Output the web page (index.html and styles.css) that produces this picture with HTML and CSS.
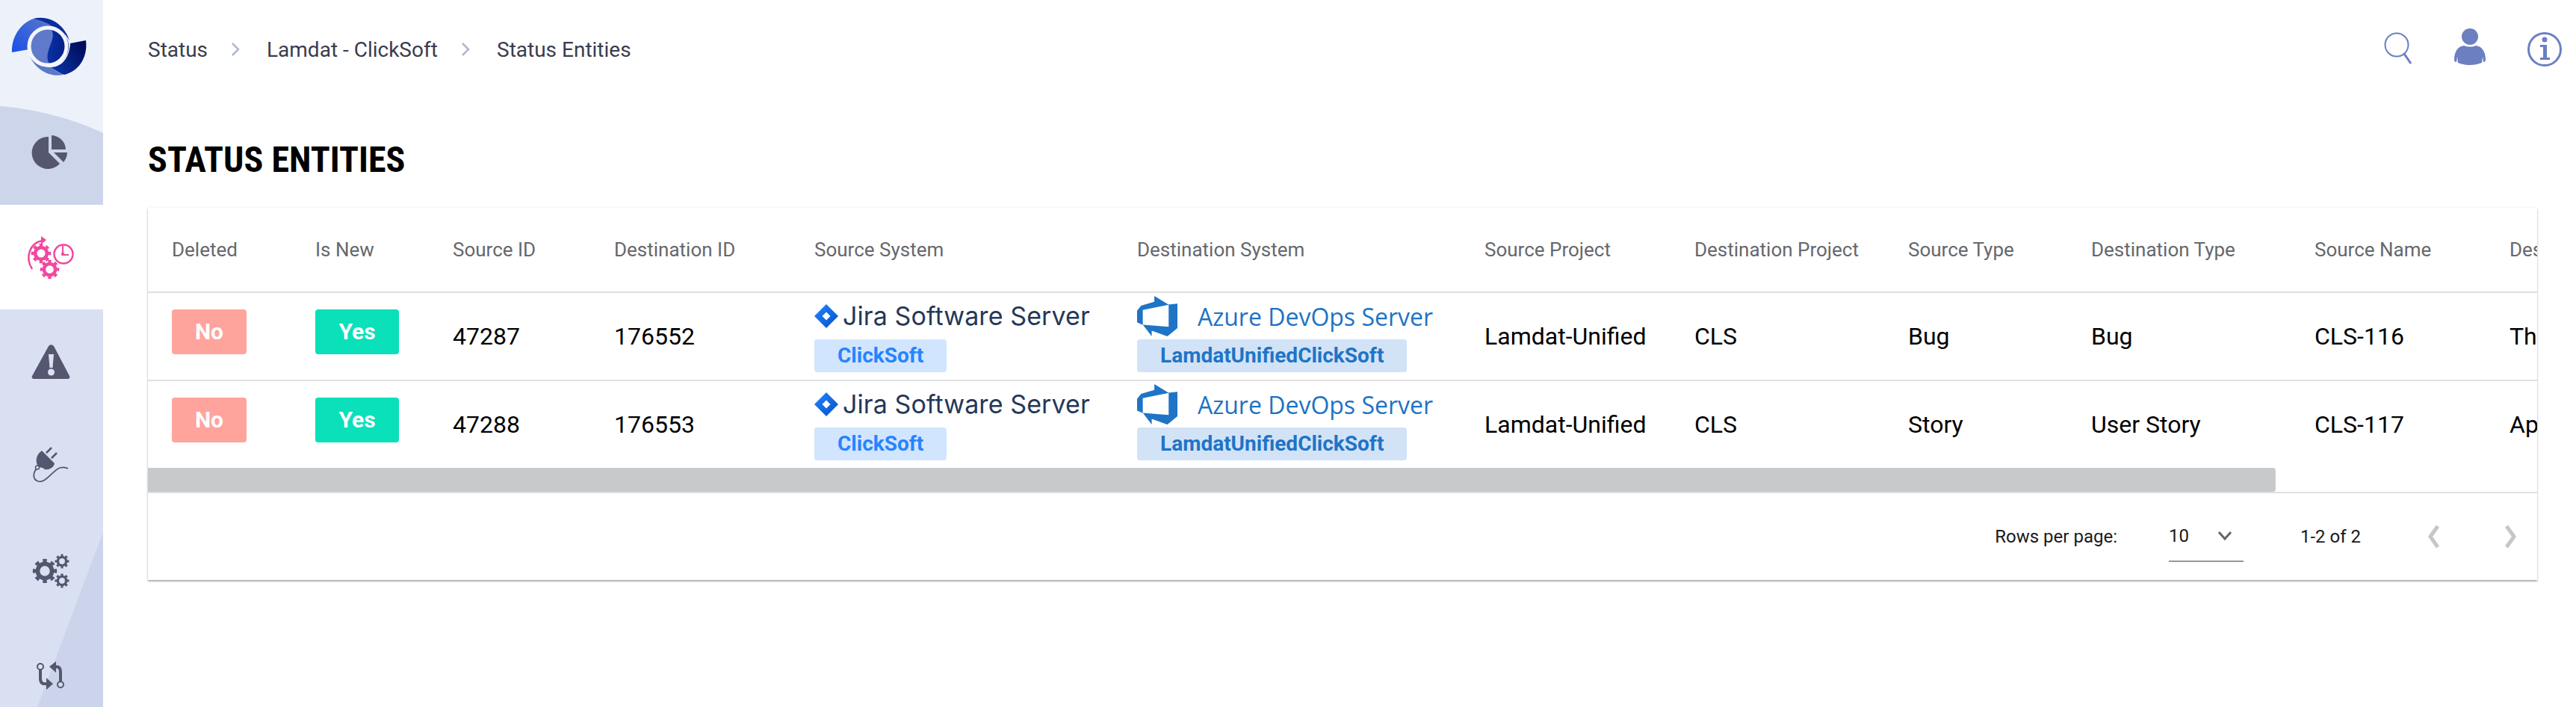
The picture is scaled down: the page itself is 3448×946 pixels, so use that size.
FILE: index.html
```html
<!DOCTYPE html>
<html lang="en">
<head>
<meta charset="utf-8">
<title>Status Entities</title>
<link rel="stylesheet" href="styles.css">
</head>
<body>
<svg class="defs" width="0" height="0" aria-hidden="true">
  <defs>
    <symbol id="gear" viewBox="-16 -16 32 32">
      <circle r="9" fill="none" stroke="currentColor" stroke-width="5.4"/>
      <circle r="12.6" fill="none" stroke="currentColor" stroke-width="5.2" pathLength="16" stroke-dasharray="1 1" stroke-dashoffset="0.5"/>
    </symbol>
    <linearGradient id="lg-left" x1="0" y1="1" x2="1" y2="0">
      <stop offset="0" stop-color="#1650ea"/><stop offset="1" stop-color="#6079c4"/>
    </linearGradient>
    <linearGradient id="lg-right" x1="0" y1="1" x2="1" y2="0.3">
      <stop offset="0" stop-color="#0b38ae"/><stop offset="1" stop-color="#000d5c"/>
    </linearGradient>
    <linearGradient id="lg-core" x1="0" y1="0" x2="1" y2="0">
      <stop offset="0" stop-color="#0a31a6"/><stop offset="1" stop-color="#041d7d"/>
    </linearGradient>
    <linearGradient id="lg-jira" x1="0" y1="0" x2="1" y2="1">
      <stop offset="0" stop-color="#2684ff"/><stop offset="1" stop-color="#0052cc"/>
    </linearGradient>
  </defs>
</svg>

<div class="page">
  <nav class="sidebar">
    <div class="side-logo">
      <svg class="logo" viewBox="0 0 138 134">
        <path d="M16 70C15 45 33 26 50 24C60 26 67 31 72 36C54 36 41 47 39 66Z" fill="url(#lg-left)"/>
        <path d="M45 25C68 19 87 35 93 54C87 44 79 38 70 35C62 30 55 27 45 25Z" fill="#0a2c9c"/>
        <path d="M94 58L115 54C118 78 104 96 86 100C80 98 74 94 68 90C82 90 93 78 94 58Z" fill="url(#lg-right)"/>
        <path d="M38 70C42 84 55 90 68 90C74 94 78 97 85 100C65 104 45 92 38 70Z" fill="#5c78c8"/>
        <circle cx="64" cy="62" r="25" fill="#5f7acb"/>
        <path d="M67 37C74 46 70 53 66 64C62 75 63 81 67 87A25 25 0 0 0 67 37Z" fill="url(#lg-core)"/>
        <circle cx="64" cy="62" r="25" fill="none" stroke="#f4f6fb" stroke-width="5"/>
      </svg>
    </div>
    <a class="side-item side-pie">
      <svg class="nav-icon" viewBox="29 164 80 80">
        <path d="M65 183V204L80 219A21.500 21.500 0 1 1 65 183Z" fill="currentColor"/>
        <path d="M69 181A20 20 0 0 1 88 200H69Z" fill="currentColor"/>
        <path d="M72 204H90A21 21 0 0 1 85 217Z" fill="currentColor"/>
      </svg>
    </a>
    <a class="side-item side-active">
      <svg class="nav-icon" viewBox="29 304 80 80">
        <path d="M43 360C33 344 40 324 58 322" fill="none" stroke="currentColor" stroke-width="2.500"/>
        <path d="M55 316L62 321L55 327Z" fill="currentColor"/>
        <use href="#gear" x="41" y="325" width="28" height="28"/>
        <use href="#gear" x="53" y="347" width="27" height="27"/>
        <circle cx="85" cy="340" r="12.500" fill="#fff" stroke="currentColor" stroke-width="2.500"/>
        <path d="M84 329V341H92" fill="none" stroke="currentColor" stroke-width="2"/>
        <circle cx="84" cy="340" r="2.200" fill="currentColor"/>
      </svg>
    </a>
    <a class="side-item">
      <svg class="nav-icon" viewBox="29 444 80 80">
        <path d="M64 465C66 460 71 460 73 465L93 503C94 505 93 507 90 507H46C43 507 42 505 43 503Z" fill="currentColor"/>
        <path d="M65 474H72L70.500 492H66.500Z" fill="#dbe1f1"/>
        <circle cx="68.500" cy="498" r="4.500" fill="#dbe1f1"/>
      </svg>
    </a>
    <a class="side-item">
      <svg class="nav-icon" viewBox="29 584 80 80">
        <path d="M56 603L73 620C72 626 65 629 60 628L57 626L52 625C47 620 47 609 56 603Z" fill="currentColor"/>
        <path d="M62 606L69 599M69 613L76 606" fill="none" stroke="currentColor" stroke-width="2.500"/>
        <path d="M50 626C44 632 43 641 51 644C61 647 70 630 80 626C84 625 88 625 91 627" fill="none" stroke="currentColor" stroke-width="1.800"/>
        <circle cx="50" cy="625.500" r="2.500" fill="#dbe1f1" stroke="currentColor" stroke-width="1.500"/>
      </svg>
    </a>
    <a class="side-item">
      <svg class="nav-icon" viewBox="29 724 80 80">
        <use href="#gear" x="43" y="747" width="34" height="34"/>
        <use href="#gear" x="73" y="741" width="20" height="20"/>
        <use href="#gear" x="73" y="767" width="20" height="20"/>
      </svg>
    </a>
    <a class="side-item">
      <svg class="nav-icon" viewBox="29 864 80 80">
        <path d="M54 896V908C54 913 56 915 60 915H64" fill="none" stroke="currentColor" stroke-width="4"/>
        <path d="M62 907L71 915L62 923Z" fill="currentColor"/>
        <path d="M81 912V899C81 894 79 892 75 892H72" fill="none" stroke="currentColor" stroke-width="4"/>
        <path d="M75 885L66 892L75 900Z" fill="currentColor"/>
        <circle cx="54" cy="892" r="4" fill="#dbe1f1" stroke="currentColor" stroke-width="2"/>
        <circle cx="81" cy="916" r="4" fill="#d2d9ee" stroke="currentColor" stroke-width="2"/>
      </svg>
    </a>
  </nav>

  <main class="main">
    <header class="topbar">
      <ol class="crumbs">
        <li class="crumb crumb-first">Status</li>
        <li class="crumb-sep"><svg class="sep-icon" viewBox="0 0 12 20"><path d="M2 2L10 10L2 18" fill="none" stroke="#aeb9cd" stroke-width="2.500"/></svg></li>
        <li class="crumb crumb-second">Lamdat - ClickSoft</li>
        <li class="crumb-sep"><svg class="sep-icon" viewBox="0 0 12 20"><path d="M2 2L10 10L2 18" fill="none" stroke="#aeb9cd" stroke-width="2.500"/></svg></li>
        <li class="crumb">Status Entities</li>
      </ol>
      <div class="tools">
        <svg class="tool tool-search" viewBox="0 0 40 60"><circle cx="18" cy="20" r="15.500" fill="none" stroke="currentColor" stroke-width="2"/><path d="M28 32L37 45" fill="none" stroke="currentColor" stroke-width="3"/></svg>
        <svg class="tool tool-user" viewBox="0 0 44 60"><circle cx="22" cy="11" r="11" fill="currentColor"/><path d="M14 23C18 25 26 25 30 23C38 24 43 31 43 42C43 44 42 45 40 45L39 38L38 46C28 50 16 50 6 46L5 38L4 45C2 45 1 44 1 42C1 31 6 24 14 23Z" fill="currentColor"/></svg>
        <svg class="tool tool-info" viewBox="0 0 46 60"><circle cx="23" cy="30" r="21.500" fill="none" stroke="currentColor" stroke-width="3"/><circle cx="23" cy="17" r="3.500" fill="currentColor"/><path d="M17 24H26V41H30V44H17V41H21V27H17Z" fill="currentColor"/></svg>
      </div>
    </header>

    <h1 class="title">STATUS ENTITIES</h1>

    <section class="card">
      <div class="table-clip">
        <table class="grid">
          <thead>
            <tr>
              <th>Deleted</th><th>Is New</th><th>Source ID</th><th>Destination ID</th><th>Source System</th><th>Destination System</th><th>Source Project</th><th>Destination Project</th><th>Source Type</th><th>Destination Type</th><th>Source Name</th><th>Destination Name</th>
            </tr>
          </thead>
          <tbody>
            <tr>
              <td class="cell-badge"><span class="badge badge-no">No</span></td>
              <td class="cell-badge"><span class="badge badge-yes">Yes</span></td>
              <td>47287</td><td>176552</td>
              <td class="cell-sys">
                <div class="sys-logo">
                  <svg class="jira-mark" viewBox="0 0 32 32"><path d="M16 0L32 16L16 32L0 16Z" fill="url(#lg-jira)"/><path d="M16 10.500L21.500 16L16 21.500L10.500 16Z" fill="#fff"/></svg>
                  <span class="jira-name">Jira Software Server</span>
                </div>
                <span class="chip chip-jira">ClickSoft</span>
              </td>
              <td class="cell-sys">
                <div class="sys-logo">
                  <svg class="azure-mark" viewBox="1 1 16 16"><path d="M17 4v9.740l-4 3.280-6.200-2.260V17l-3.510-4.590 10.230.8V4.440zm-3.410.49L7.850 1v2.290L2.580 4.840 1 6.870v4.610l2.260 1V6.570z" fill="#1f74c6"/></svg>
                  <span class="azure-name">Azure DevOps Server</span>
                </div>
                <span class="chip chip-azure">LamdatUnifiedClickSoft</span>
              </td>
              <td>Lamdat-Unified</td><td>CLS</td><td>Bug</td><td>Bug</td><td>CLS-116</td><td>The login page fails</td>
            </tr>
            <tr>
              <td class="cell-badge"><span class="badge badge-no">No</span></td>
              <td class="cell-badge"><span class="badge badge-yes">Yes</span></td>
              <td>47288</td><td>176553</td>
              <td class="cell-sys">
                <div class="sys-logo">
                  <svg class="jira-mark" viewBox="0 0 32 32"><path d="M16 0L32 16L16 32L0 16Z" fill="url(#lg-jira)"/><path d="M16 10.500L21.500 16L16 21.500L10.500 16Z" fill="#fff"/></svg>
                  <span class="jira-name">Jira Software Server</span>
                </div>
                <span class="chip chip-jira">ClickSoft</span>
              </td>
              <td class="cell-sys">
                <div class="sys-logo">
                  <svg class="azure-mark" viewBox="1 1 16 16"><path d="M17 4v9.740l-4 3.280-6.200-2.260V17l-3.510-4.590 10.230.8V4.440zm-3.410.49L7.850 1v2.290L2.580 4.840 1 6.870v4.610l2.260 1V6.570z" fill="#1f74c6"/></svg>
                  <span class="azure-name">Azure DevOps Server</span>
                </div>
                <span class="chip chip-azure">LamdatUnifiedClickSoft</span>
              </td>
              <td>Lamdat-Unified</td><td>CLS</td><td>Story</td><td>User Story</td><td>CLS-117</td><td>Approve the request</td>
            </tr>
          </tbody>
        </table>
      </div>
      <div class="scroll-track"><div class="scroll-thumb"></div></div>
      <footer class="pager">
        <span class="pager-label">Rows per page:</span>
        <div class="pager-select">
          <span>10</span>
          <svg class="pager-caret" viewBox="0 0 20 14"><path d="M2 2L10 11L18 2" fill="none" stroke="#666" stroke-width="3"/></svg>
        </div>
        <span class="pager-count">1-2 of 2</span>
        <svg class="pager-arrow pager-prev" viewBox="0 0 24 32"><path d="M17 2L7 16L17 30" fill="none" stroke="#c4c6c8" stroke-width="5"/></svg>
        <svg class="pager-arrow" viewBox="0 0 24 32"><path d="M7 2L17 16L7 30" fill="none" stroke="#c4c6c8" stroke-width="5"/></svg>
      </footer>
    </section>
  </main>
</div>
</body>
</html>
```

FILE: styles.css
```css
* { box-sizing: border-box; }

html, body {
  margin: 0;
  height: 100%;
  background: #fff;
  font-family: Roboto, "Liberation Sans", sans-serif;
  overflow: hidden;
}

.defs { position: absolute; }

.page {
  display: flex;
  width: 3448px;
  height: 946px;
  overflow: hidden;
}

/* Sidebar */
.sidebar {
  position: relative;
  flex: 0 0 138px;
  display: flex;
  flex-direction: column;
  height: 946px;
  overflow: hidden;
  background: #d9e0f1;
  color: #555770;
}

.sidebar::before {
  content: "";
  position: absolute;
  left: 0;
  top: 0;
  width: 138px;
  height: 274px;
  background: #ccd5e9;
}

.sidebar::after {
  content: "";
  position: absolute;
  left: 0;
  top: 0;
  width: 138px;
  height: 946px;
  background: #ccd4ec;
  clip-path: polygon(138px 712px, 138px 946px, 50px 946px);
}

.side-logo {
  position: relative;
  z-index: 1;
  flex: 0 0 134px;
}

.logo {
  position: absolute;
  left: 0;
  top: 0;
  width: 138px;
  height: 134px;
  overflow: visible;
}

.side-logo::before {
  content: "";
  position: absolute;
  left: 0;
  top: 0;
  width: 138px;
  height: 180px;
  background: #edf1f9;
  clip-path: path("M0 0H138V178C100 160 50 146 0 142Z");
}

.side-item {
  position: relative;
  z-index: 1;
  flex: 0 0 140px;
  display: flex;
  align-items: center;
  justify-content: center;
}

.side-active {
  background: #fff;
  color: #f0489f;
}

.nav-icon {
  width: 80px;
  height: 80px;
}

/* Main column */
.main {
  flex: 1;
  min-width: 0;
  padding: 0 52px 0 60px;
}

.topbar {
  display: flex;
  align-items: center;
  justify-content: space-between;
  height: 132px;
  margin-right: -32px;
}

.crumbs {
  display: flex;
  align-items: center;
  margin: 0;
  padding: 0;
  list-style: none;
  font-size: 28px;
  color: #3a3d4d;
}

.crumb-first { width: 111px; }
.crumb-second { width: 260px; }
.crumb-sep {
  display: flex;
  width: 48px;
}

.sep-icon {
  width: 12px;
  height: 20px;
}

.tools {
  display: flex;
  align-items: center;
  color: #6b7fc1;
}

.tool { height: 60px; }
.tool-search { width: 40px; margin-top: 8px; }
.tool-user { width: 44px; margin-left: 54px; margin-top: 4px; }
.tool-info { width: 46px; margin-left: 55px; margin-right: -1px; }

.title {
  display: flex;
  align-items: center;
  height: 146px;
  margin: 0;
  padding-top: 16px;
  font-size: 48px;
  font-weight: 700;
  font-stretch: 75%;
  color: #000;
}

/* Card */
.card {
  height: 498px;
  background: #fff;
  box-shadow: 0 2px 2px rgba(0, 0, 0, .3), 0 0 4px rgba(0, 0, 0, .08);
  overflow: hidden;
}

.table-clip {
  overflow: hidden;
  height: 348px;
}

.grid {
  table-layout: fixed;
  width: 3329px;
  border-collapse: separate;
  border-spacing: 0;
}

.grid th, .grid td {
  padding: 0 0 0 32px;
  text-align: left;
  white-space: nowrap;
  overflow: hidden;
  border-bottom: 2px solid #e0e0e0;
}

.grid th {
  height: 114px;
  font-size: 26px;
  font-weight: 400;
  color: #66686c;
}

.grid td {
  height: 118px;
  font-size: 32px;
  color: #000;
}

.grid tbody tr:last-child td {
  height: 116px;
  border-bottom: 0;
}

.grid th:nth-child(1) { width: 192px; }
.grid th:nth-child(2) { width: 184px; }
.grid th:nth-child(3) { width: 216px; }
.grid th:nth-child(4) { width: 268px; }
.grid th:nth-child(5) { width: 432px; }
.grid th:nth-child(6) { width: 465px; }
.grid th:nth-child(7) { width: 281px; }
.grid th:nth-child(8) { width: 286px; }
.grid th:nth-child(9) { width: 245px; }
.grid th:nth-child(10) { width: 299px; }
.grid th:nth-child(11) { width: 261px; }
.grid th:nth-child(12) { width: 400px; }

.grid td.cell-badge { padding-bottom: 12px; }
.grid td.cell-sys { padding-bottom: 6px; }

.badge {
  display: block;
  height: 60px;
  border-radius: 4px;
  font-size: 30px;
  font-weight: 700;
  line-height: 60px;
  text-align: center;
  color: #fff;
}

.badge-no { width: 100px; background: #ffa49c; }
.badge-yes { width: 112px; background: #0ae0b9; }

.sys-logo {
  display: flex;
  align-items: center;
  height: 54px;
  margin-bottom: 4px;
}

.jira-mark {
  width: 32px;
  height: 32px;
  margin-right: 6px;
}

.jira-name {
  font-family: Inter, sans-serif;
  font-size: 34px;
  letter-spacing: .1px;
  margin-top: -2px;
  color: #253858;
}

.azure-mark {
  width: 54px;
  height: 54px;
  margin-right: 27px;
}

.azure-name {
  font-family: "Open Sans", sans-serif;
  font-size: 32px;
  color: #1e73c4;
}

.chip {
  display: block;
  width: fit-content;
  height: 44px;
  padding: 0 31px;
  border-radius: 4px;
  font-size: 28px;
  font-weight: 700;
  line-height: 44px;
}

.chip-jira { background: #d2e5fe; color: #2684ff; }
.chip-azure { background: #d2e3f7; color: #1f74c6; }

.scroll-track {
  height: 34px;
  border-bottom: 2px solid #e0e0e0;
}

.scroll-thumb {
  width: 2848px;
  height: 32px;
  background: #c8c9cb;
  border-radius: 0 4px 4px 0;
}

.pager {
  display: flex;
  align-items: center;
  justify-content: flex-end;
  height: 116px;
  padding-right: 24px;
  font-size: 24px;
  color: #1a1a1a;
}

.pager-label { margin-right: 69px; }

.pager-select {
  display: flex;
  align-items: center;
  width: 100px;
  height: 68px;
  margin-right: 76px;
  border-bottom: 2px solid #979797;
}

.pager-caret {
  width: 20px;
  height: 14px;
  margin-left: 38px;
}

.pager-count { margin-right: 86px; }

.pager-arrow {
  width: 24px;
  height: 32px;
}

.pager-prev { margin-right: 78px; }
```
